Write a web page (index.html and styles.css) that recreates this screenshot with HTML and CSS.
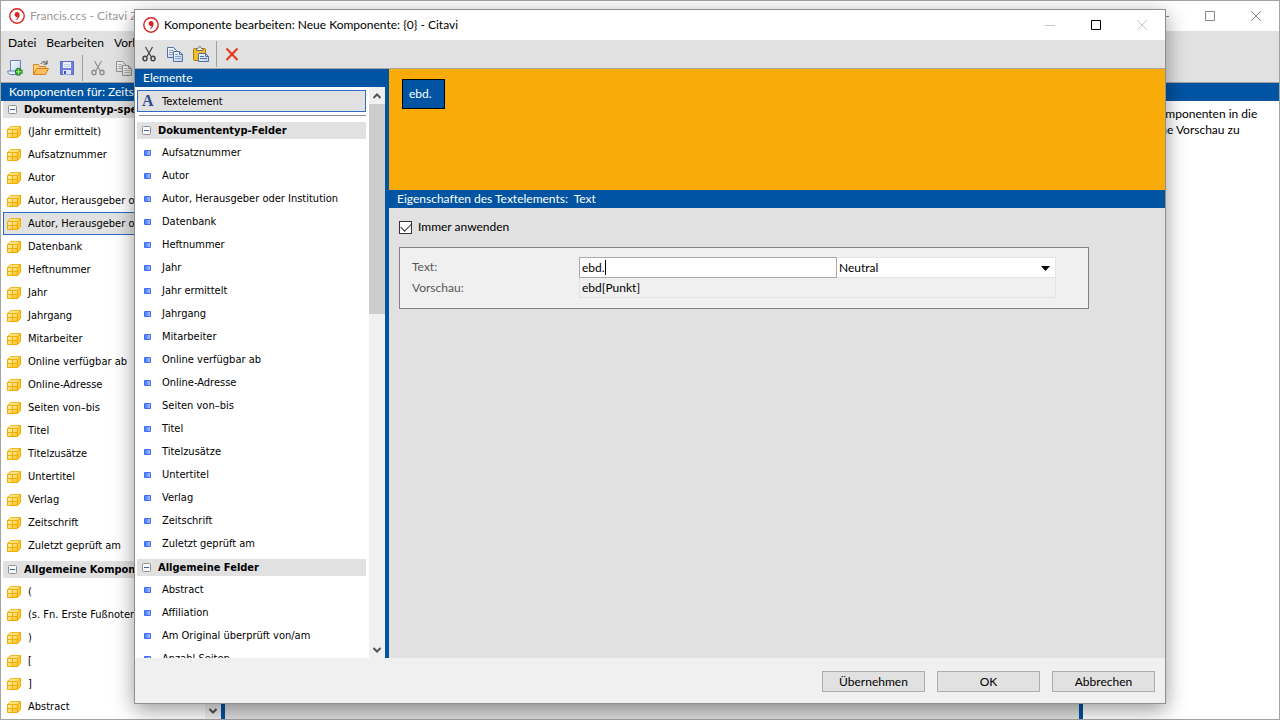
FILE: index.html
```html
<!DOCTYPE html>
<html lang="de">
<head>
  <meta charset="UTF-8">
  <meta name="viewport" content="width=device-width, initial-scale=1.0">
  <title>Citavi</title>
  <link rel="stylesheet" href="styles.css">
</head>

<body>
  <svg class="sprite" aria-hidden="true">
    <defs>
      <linearGradient id="gold" x1="0" y1="0" x2="1" y2="1">
        <stop offset="0" stop-color="#fff3c0"/><stop offset="1" stop-color="#ffc21f"/>
      </linearGradient>
      <linearGradient id="blue" x1="0" y1="0" x2="1" y2="0">
        <stop offset="0" stop-color="#3d70ff"/><stop offset="1" stop-color="#b4c8ff"/>
      </linearGradient>
      <linearGradient id="paper" x1="0" y1="0" x2="1" y2="1">
        <stop offset="0" stop-color="#ffffff"/><stop offset="1" stop-color="#b5cbee"/>
      </linearGradient>
    </defs>
    <symbol id="logo" viewBox="0 0 16 16">
      <circle cx="8" cy="8" r="7.2" fill="#fff" stroke="#d4251f" stroke-width="1.4"/>
      <path d="M8 4c1.500 0 2.600 1.100 2.600 2.700 0 2.500-1.300 4.300-3.400 5.300l-.4-.6c1.100-.7 1.600-1.600 1.700-2.500-.2.100-.4.100-.7.100-1.300 0-2.200-1-2.200-2.400S6.600 4 8 4z" fill="#d4251f"/>
    </symbol>
    <symbol id="cube" viewBox="0 0 14 14">
      <path d="M.5 4.500L3.500 1.500H13.500L10.500 4.500z" fill="#ffe182" stroke="#f5b81c"/>
      <path d="M10.500 4.500L13.500 1.500V9.500L10.500 12.500z" fill="#ffc933" stroke="#f2ae00"/>
      <path d="M.5 4.500h10v8H.5z" fill="url(#gold)" stroke="#f2ae00"/>
      <path d="M5.500 5v7M1 8.500h9" fill="none" stroke="#f2ae00"/>
    </symbol>
    <symbol id="field" viewBox="0 0 7 6">
      <path d="M.5.5h6v5h-6z" fill="url(#blue)" stroke="#3f6ff5"/>
    </symbol>
    <symbol id="minus" viewBox="0 0 9 9">
      <rect x=".5" y=".5" width="8" height="8" rx="1" fill="#fafafa" stroke="#919191"/>
      <path d="M2 4.500h5" stroke="#3c5fae"/>
    </symbol>
    <symbol id="cut" viewBox="0 0 16 16">
      <path d="M4.500 1L10 10.500M11.500 1L6 10.500" fill="none" stroke="currentColor" stroke-width="1.200"/>
      <ellipse cx="4" cy="12.500" rx="2" ry="2.300" fill="none" stroke="currentColor" stroke-width="1.500"/>
      <ellipse cx="12" cy="12.500" rx="2" ry="2.300" fill="none" stroke="currentColor" stroke-width="1.500"/>
    </symbol>
    <symbol id="copy" viewBox="0 0 16 16">
      <path d="M.5 1.500h6l3 3v7h-9z" fill="url(#paper)" stroke="currentColor"/>
      <path d="M2 4.500h4M2 6.500h5M2 8.500h4" stroke="currentColor" stroke-opacity=".6"/>
      <path d="M6.500 5.500h6l3 3v7h-9z" fill="url(#paper)" stroke="currentColor"/>
      <path d="M12.500 5.500v3h3" fill="none" stroke="currentColor"/>
      <path d="M8 8.500h3M8 10.500h6M8 12.500h6" stroke="currentColor" stroke-opacity=".6"/>
    </symbol>
    <symbol id="paste" viewBox="0 0 16 16">
      <rect x=".5" y="2.500" width="12" height="12" rx="1" fill="#f0bd2f" stroke="#a87a12"/>
      <path d="M3.500 4.500v-2h1.500L6 .7h1.500l1 1.800H10v2z" fill="#f3efdf" stroke="#77715b"/>
      <path d="M5.500 7.500h7l3 3v5h-10z" fill="url(#paper)" stroke="#53709c"/>
      <path d="M12.500 7.500v3h3M7 10.500h4M7 12.500h7" fill="none" stroke="#53709c"/>
    </symbol>
    <symbol id="delete" viewBox="0 0 16 16">
      <path d="M2.500 2.500l11 11.500M13.500 2.500L2.500 14" fill="none" stroke="#e8311d" stroke-width="2"/>
    </symbol>
    <symbol id="new" viewBox="0 0 16 16">
      <path d="M3.500.5h10v12h-10z" fill="url(#paper)" stroke="#6783b5"/>
      <path d="M3.500 11H.8c0 2.500.8 3.500 2.700 3.500H10V11z" fill="#e3ecfa" stroke="#6783b5"/>
      <path d="M11.500 8v7.500M8 11.700h7.500" stroke="#16801c" stroke-width="4"/>
      <path d="M11.500 9v5.500M9 11.700h5.500" stroke="#8ce55c" stroke-width="1.600"/>
    </symbol>
    <symbol id="open" viewBox="0 0 16 16">
      <path d="M.5 14.500v-10h5l1 2h6v8z" fill="#ffd07d" stroke="#dd8420"/>
      <path d="M.5 14.500l3-6h12l-3 6z" fill="#ffbf5e" stroke="#dd8420"/>
      <path d="M8 4c1-2.500 3.500-3 5.500-1M14 .5V4h-3.500" fill="none" stroke="#444"/>
    </symbol>
    <symbol id="save" viewBox="0 0 16 16">
      <path d="M1.500 1.500h13v13h-13z" fill="#6f80df" stroke="#5a68cc"/>
      <path d="M4 2h8v6H4z" fill="#eef2ff"/>
      <path d="M5 4.500h6M5 6.500h6" stroke="#c0caee"/>
      <path d="M4 10h8v4.500H4z" fill="#dfe4fb"/>
      <path d="M5 11h2v3H5z" fill="#4454bd"/>
    </symbol>
    <symbol id="win-min" viewBox="0 0 10 10"><path d="M0 5.500h10" stroke="currentColor"/></symbol>
    <symbol id="win-max" viewBox="0 0 10 10"><path d="M.5.5h9v9h-9z" fill="none" stroke="currentColor"/></symbol>
    <symbol id="win-close" viewBox="0 0 10 10"><path d="M0 0l10 10M10 0L0 10" stroke="currentColor"/></symbol>
    <symbol id="arrow-up" viewBox="0 0 8 6"><path d="M.5 5L4 1.500 7.500 5" fill="none" stroke="#555" stroke-width="2"/></symbol>
    <symbol id="arrow-down" viewBox="0 0 8 6"><path d="M.5 1L4 4.500 7.500 1" fill="none" stroke="#555" stroke-width="2"/></symbol>
  </svg>

  <!-- Hauptfenster -->
  <div class="window">
    <header class="titlebar inactive">
      <svg class="logo"><use href="#logo"/></svg>
      <h1>Francis.ccs - Citavi Z</h1>
      <div class="winbuttons">
        <button type="button" aria-label="Minimieren"><svg><use href="#win-min"/></svg></button>
        <button type="button" aria-label="Maximieren"><svg><use href="#win-max"/></svg></button>
        <button type="button" aria-label="Schließen"><svg><use href="#win-close"/></svg></button>
      </div>
    </header>
    <nav class="menu">
      <button type="button">Datei</button>
      <button type="button">Bearbeiten</button>
      <button type="button">Vorlage</button>
    </nav>
    <div class="toolbar">
      <button type="button" aria-label="Neu"><svg><use href="#new"/></svg></button>
      <button type="button" aria-label="Öffnen"><svg><use href="#open"/></svg></button>
      <button type="button" aria-label="Speichern"><svg><use href="#save"/></svg></button>
      <span class="divider"></span>
      <button type="button" class="off" aria-label="Ausschneiden"><svg><use href="#cut"/></svg></button>
      <button type="button" class="off" aria-label="Kopieren"><svg><use href="#copy"/></svg></button>
    </div>
    <div class="columns">
      <section class="components">
        <h2 class="bar">Komponenten für: Zeitschrift</h2>
        <div class="scroller">
          <div class="list list-main">
            <button type="button" class="group"><svg><use href="#minus"/></svg>Dokumententyp-spez.</button>
            <button type="button" class="row"><svg><use href="#cube"/></svg>(Jahr ermittelt)</button>
            <button type="button" class="row"><svg><use href="#cube"/></svg>Aufsatznummer</button>
            <button type="button" class="row"><svg><use href="#cube"/></svg>Autor</button>
            <button type="button" class="row"><svg><use href="#cube"/></svg>Autor, Herausgeber oder</button>
            <button type="button" class="row selected"><svg><use href="#cube"/></svg>Autor, Herausgeber oder</button>
            <button type="button" class="row"><svg><use href="#cube"/></svg>Datenbank</button>
            <button type="button" class="row"><svg><use href="#cube"/></svg>Heftnummer</button>
            <button type="button" class="row"><svg><use href="#cube"/></svg>Jahr</button>
            <button type="button" class="row"><svg><use href="#cube"/></svg>Jahrgang</button>
            <button type="button" class="row"><svg><use href="#cube"/></svg>Mitarbeiter</button>
            <button type="button" class="row"><svg><use href="#cube"/></svg>Online verfügbar ab</button>
            <button type="button" class="row"><svg><use href="#cube"/></svg>Online-Adresse</button>
            <button type="button" class="row"><svg><use href="#cube"/></svg>Seiten von–bis</button>
            <button type="button" class="row"><svg><use href="#cube"/></svg>Titel</button>
            <button type="button" class="row"><svg><use href="#cube"/></svg>Titelzusätze</button>
            <button type="button" class="row"><svg><use href="#cube"/></svg>Untertitel</button>
            <button type="button" class="row"><svg><use href="#cube"/></svg>Verlag</button>
            <button type="button" class="row"><svg><use href="#cube"/></svg>Zeitschrift</button>
            <button type="button" class="row"><svg><use href="#cube"/></svg>Zuletzt geprüft am</button>
            <button type="button" class="group"><svg><use href="#minus"/></svg>Allgemeine Kompon.</button>
            <button type="button" class="row"><svg><use href="#cube"/></svg>(</button>
            <button type="button" class="row"><svg><use href="#cube"/></svg>(s. Fn. Erste Fußnoten</button>
            <button type="button" class="row"><svg><use href="#cube"/></svg>)</button>
            <button type="button" class="row"><svg><use href="#cube"/></svg>[</button>
            <button type="button" class="row"><svg><use href="#cube"/></svg>]</button>
            <button type="button" class="row"><svg><use href="#cube"/></svg>Abstract</button>
          </div>
          <div class="scrollbar">
            <button type="button" aria-label="Nach oben"><svg><use href="#arrow-up"/></svg></button>
            <button type="button" aria-label="Nach unten"><svg><use href="#arrow-down"/></svg></button>
          </div>
        </div>
      </section>
      <section class="workspace">
        <div class="bar"></div>
      </section>
      <aside class="help">
        <div class="bar"></div>
        <p>Komponenten in die<br>eine Vorschau zu</p>
      </aside>
    </div>
  </div>

  <!-- Dialog -->
  <div class="dialog" role="dialog" aria-labelledby="dialog-title">
    <header class="titlebar">
      <svg class="logo"><use href="#logo"/></svg>
      <h1 id="dialog-title">Komponente bearbeiten: Neue Komponente: {0} - Citavi</h1>
      <div class="winbuttons">
        <button type="button" class="off" aria-label="Minimieren"><svg><use href="#win-min"/></svg></button>
        <button type="button" aria-label="Maximieren"><svg><use href="#win-max"/></svg></button>
        <button type="button" class="off" aria-label="Schließen"><svg><use href="#win-close"/></svg></button>
      </div>
    </header>
    <div class="toolbar">
      <button type="button" class="dark" aria-label="Ausschneiden"><svg><use href="#cut"/></svg></button>
      <button type="button" aria-label="Kopieren"><svg><use href="#copy"/></svg></button>
      <button type="button" aria-label="Einfügen"><svg><use href="#paste"/></svg></button>
      <span class="divider"></span>
      <button type="button" aria-label="Löschen"><svg><use href="#delete"/></svg></button>
    </div>
    <div class="columns">
      <section class="elements">
        <h2 class="bar">Elemente</h2>
        <div class="scroller">
          <div class="list">
            <button type="button" class="text-element"><span class="letter">A</span>Textelement</button>
            <hr>
            <button type="button" class="group"><svg><use href="#minus"/></svg>Dokumententyp-Felder</button>
            <button type="button" class="row"><svg><use href="#field"/></svg>Aufsatznummer</button>
            <button type="button" class="row"><svg><use href="#field"/></svg>Autor</button>
            <button type="button" class="row"><svg><use href="#field"/></svg>Autor, Herausgeber oder Institution</button>
            <button type="button" class="row"><svg><use href="#field"/></svg>Datenbank</button>
            <button type="button" class="row"><svg><use href="#field"/></svg>Heftnummer</button>
            <button type="button" class="row"><svg><use href="#field"/></svg>Jahr</button>
            <button type="button" class="row"><svg><use href="#field"/></svg>Jahr ermittelt</button>
            <button type="button" class="row"><svg><use href="#field"/></svg>Jahrgang</button>
            <button type="button" class="row"><svg><use href="#field"/></svg>Mitarbeiter</button>
            <button type="button" class="row"><svg><use href="#field"/></svg>Online verfügbar ab</button>
            <button type="button" class="row"><svg><use href="#field"/></svg>Online-Adresse</button>
            <button type="button" class="row"><svg><use href="#field"/></svg>Seiten von–bis</button>
            <button type="button" class="row"><svg><use href="#field"/></svg>Titel</button>
            <button type="button" class="row"><svg><use href="#field"/></svg>Titelzusätze</button>
            <button type="button" class="row"><svg><use href="#field"/></svg>Untertitel</button>
            <button type="button" class="row"><svg><use href="#field"/></svg>Verlag</button>
            <button type="button" class="row"><svg><use href="#field"/></svg>Zeitschrift</button>
            <button type="button" class="row"><svg><use href="#field"/></svg>Zuletzt geprüft am</button>
            <button type="button" class="group"><svg><use href="#minus"/></svg>Allgemeine Felder</button>
            <button type="button" class="row"><svg><use href="#field"/></svg>Abstract</button>
            <button type="button" class="row"><svg><use href="#field"/></svg>Affiliation</button>
            <button type="button" class="row"><svg><use href="#field"/></svg>Am Original überprüft von/am</button>
            <button type="button" class="row"><svg><use href="#field"/></svg>Anzahl Seiten</button>
          </div>
          <div class="scrollbar">
            <button type="button" aria-label="Nach oben"><svg><use href="#arrow-up"/></svg></button>
            <span class="thumb"></span>
            <button type="button" aria-label="Nach unten"><svg><use href="#arrow-down"/></svg></button>
          </div>
        </div>
      </section>
      <section class="editor">
        <div class="canvas">
          <button type="button" class="chip">ebd.</button>
        </div>
        <h2 class="bar">Eigenschaften des Textelements:&nbsp; Text</h2>
        <form class="properties">
          <label class="check"><input type="checkbox" checked>Immer anwenden</label>
          <div class="box">
            <label for="text">Text:</label>
            <div class="inputs">
              <div class="textfield">
                <input id="text" type="text" value="ebd.">
                <span class="caret"></span>
              </div>
              <div class="dropdown">
                <select aria-label="Schriftstil"><option>Neutral</option></select>
                <svg viewBox="0 0 9 5"><path d="M0 0h9L4.500 5z"/></svg>
              </div>
            </div>
            <label for="preview">Vorschau:</label>
            <input id="preview" class="preview" type="text" value="ebd[Punkt]" readonly>
          </div>
        </form>
      </section>
    </div>
    <footer class="actions">
      <button type="button">Übernehmen</button>
      <button type="button">OK</button>
      <button type="button">Abbrechen</button>
    </footer>
  </div>
</body>
</html>
```

FILE: styles.css
```css
* {
  box-sizing: border-box;
}

body {
  margin: 0;
  height: 100vh;
  overflow: hidden;
  font: 12px/16px Lato, "Open Sans", sans-serif;
  font-variant-ligatures: none;
  color: #000;
}

button, input, select {
  margin: 0;
  padding: 0;
  border: 0;
  background: none;
  border-radius: 0;
  font: inherit;
  color: inherit;
}

h1, h2, p {
  margin: 0;
  font-size: 12px;
  font-weight: normal;
}

svg {
  display: block;
  flex: none;
}

.sprite {
  position: absolute;
  width: 0;
  height: 0;
}

/* --------------- Fenster ----------------- */

.window, .dialog {
  display: flex;
  flex-direction: column;
  overflow: hidden;
  background: #e1e1e1;
}

.window {
  height: 100%;
  border: 1px solid #a3a3a3;
}

.dialog {
  position: absolute;
  top: 9px;
  right: 114px;
  bottom: 16px;
  left: 134px;
  border: 1px solid #8f8f8f;
  box-shadow: 0 6px 20px rgba(0,0,0, 0.4);
}

.titlebar {
  display: flex;
  align-items: center;
  flex: none;
  height: 30px;
  padding-left: 8px;
  background: #fff;
  white-space: nowrap;
}

.titlebar h1 {
  flex: 1;
}

.titlebar.inactive {
  color: #999;
}

.logo {
  width: 16px;
  height: 16px;
  margin-right: 5px;
}

.winbuttons {
  display: flex;
}

.winbuttons button {
  display: flex;
  align-items: center;
  justify-content: center;
  width: 46px;
  height: 30px;
}

.winbuttons svg {
  width: 10px;
  height: 10px;
}

.inactive .winbuttons {
  color: #888;
}

.winbuttons .off {
  color: #c8c8c8;
}

.menu {
  display: flex;
  flex: none;
  gap: 10px;
  height: 23px;
  padding-left: 7px;
}

.toolbar {
  display: flex;
  align-items: center;
  flex: none;
  gap: 10px;
  height: 29px;
  padding-left: 6px;
  border-bottom: 1px solid #a5a5a5;
}

.toolbar button {
  color: #5473a3;
}

.toolbar svg {
  width: 16px;
  height: 16px;
}

.toolbar .off {
  color: #909090;
  filter: grayscale(1);
}

.toolbar .dark {
  color: #444;
}

.divider {
  width: 1px;
  height: 26px;
  margin: 0 -3px;
  background: #a0a0a0;
}

.columns {
  display: flex;
  flex: 1;
  min-height: 0;
}

.bar {
  flex: none;
  height: 18px;
  padding-left: 8px;
  line-height: 18px;
  background: #0054a1;
  color: #fff;
  white-space: nowrap;
}

/* --------------- Listen ----------------- */

.components, .elements {
  display: flex;
  flex-direction: column;
  flex: none;
  border-right: 4px solid #0054a1;
  background: #fff;
}

.components {
  width: 224px;
}

.elements {
  width: 254px;
}

.scroller {
  display: flex;
  flex: 1;
  min-height: 0;
}

.list {
  flex: 1;
  min-width: 0;
  padding: 3px 3px 0 2px;
  overflow: hidden;
  font-family: "DejaVu Sans Condensed", "Open Sans", sans-serif;
  font-size: 11px;
  line-height: 17px;
}

.list-main {
  padding-top: 0;
}

.list button {
  display: flex;
  align-items: center;
  width: 100%;
  text-align: left;
  white-space: nowrap;
}

.list .group {
  height: 17px;
  margin: 4px 0 2px;
  padding-left: 5px;
  background: #e1e1e1;
  font-weight: bold;
}

.list-main .group:first-child {
  margin-top: 0;
}

.group svg {
  width: 9px;
  height: 9px;
  margin-right: 7px;
}

.row {
  height: 23px;
  padding-left: 7px;
}

.row svg {
  width: 7px;
  height: 6px;
  margin-right: 11px;
}

.list-main .row {
  padding-left: 4px;
}

.list-main .row svg {
  width: 14px;
  height: 14px;
  margin-right: 7px;
}

.list .selected {
  padding-left: 3px;
  border: 1px solid #316ac5;
  background: #e1e1e1;
}

.list .text-element {
  height: 22px;
  border: 1px solid #316ac5;
  background: #e1e1e1;
}

.letter {
  width: 24px;
  padding-left: 4px;
  font: bold 16px "Liberation Serif", serif;
  color: #2f4b8f;
}

.list hr {
  height: 1px;
  margin: 3px 0 6px 2px;
  border: 0;
  background: #8c8c8c;
}

.scrollbar {
  display: flex;
  flex-direction: column;
  justify-content: space-between;
  flex: none;
  width: 16px;
  background: #f0f0f0;
}

.scrollbar button {
  display: flex;
  align-items: center;
  justify-content: center;
  height: 17px;
}

.scrollbar svg {
  width: 8px;
  height: 6px;
}

.thumb {
  height: 210px;
  margin-bottom: auto;
  background: #cdcdcd;
}

/* --------------- Rechte Seite ----------------- */

.workspace {
  flex: 1;
}

.help {
  width: 200px;
  border-left: 4px solid #0054a1;
  background: #fff;
}

.help p {
  padding: 5px 0 0 68px;
  white-space: nowrap;
}

.editor {
  display: flex;
  flex-direction: column;
  flex: 1;
  min-width: 0;
}

.canvas {
  height: 121px;
  padding: 10px 13px;
  background: #f9ab09;
}

.chip {
  height: 30px;
  padding: 0 12px 0 6px;
  border: 1px solid #000;
  background: #0054a1;
  color: #fff;
}

.properties {
  padding: 11px 76px 0 10px;
}

.check {
  display: flex;
  align-items: center;
  gap: 6px;
}

.check input {
  display: grid;
  width: 13px;
  height: 13px;
  appearance: none;
  border: 1px solid #333;
  background: #fff;
}

.check input:checked::before {
  content: "";
  width: 9px;
  height: 5px;
  margin: 2px 1px;
  border: solid #333;
  border-width: 0 0 1px 1px;
  transform: translateY(-1px) rotate(-45deg);
}

.box {
  display: grid;
  grid-template-columns: 167px 1fr;
  margin-top: 12px;
  padding: 9px 32px 10px 12px;
  border: 1px solid #828282;
  background: #f0f0f0;
}

.box label {
  line-height: 20px;
  color: #555;
}

.inputs {
  display: flex;
}

.textfield {
  position: relative;
  flex: 258;
}

.textfield input {
  width: 100%;
  height: 21px;
  padding-left: 2px;
  border: 1px solid #aaa;
  background: #fff;
}

.caret {
  position: absolute;
  top: 3px;
  left: 26px;
  width: 1px;
  height: 15px;
  background: #000;
}

.dropdown {
  position: relative;
  flex: 219;
}

.dropdown select {
  width: 100%;
  height: 21px;
  padding-left: 2px;
  appearance: none;
  border: 1px solid #e3e3e3;
  border-left: 0;
  background: #fff;
}

.dropdown svg {
  position: absolute;
  top: 9px;
  right: 6px;
  width: 9px;
  height: 5px;
}

.preview {
  height: 20px;
  padding-left: 2px;
  border: 1px solid #e3e3e3;
  border-top: 0;
}

.actions {
  display: flex;
  justify-content: flex-end;
  flex: none;
  gap: 12px;
  height: 45px;
  padding: 13px 10px 0;
  background: #f0f0f0;
}

.actions button {
  width: 103px;
  height: 21px;
  border: 1px solid #adadad;
  background: #e1e1e1;
}
```
